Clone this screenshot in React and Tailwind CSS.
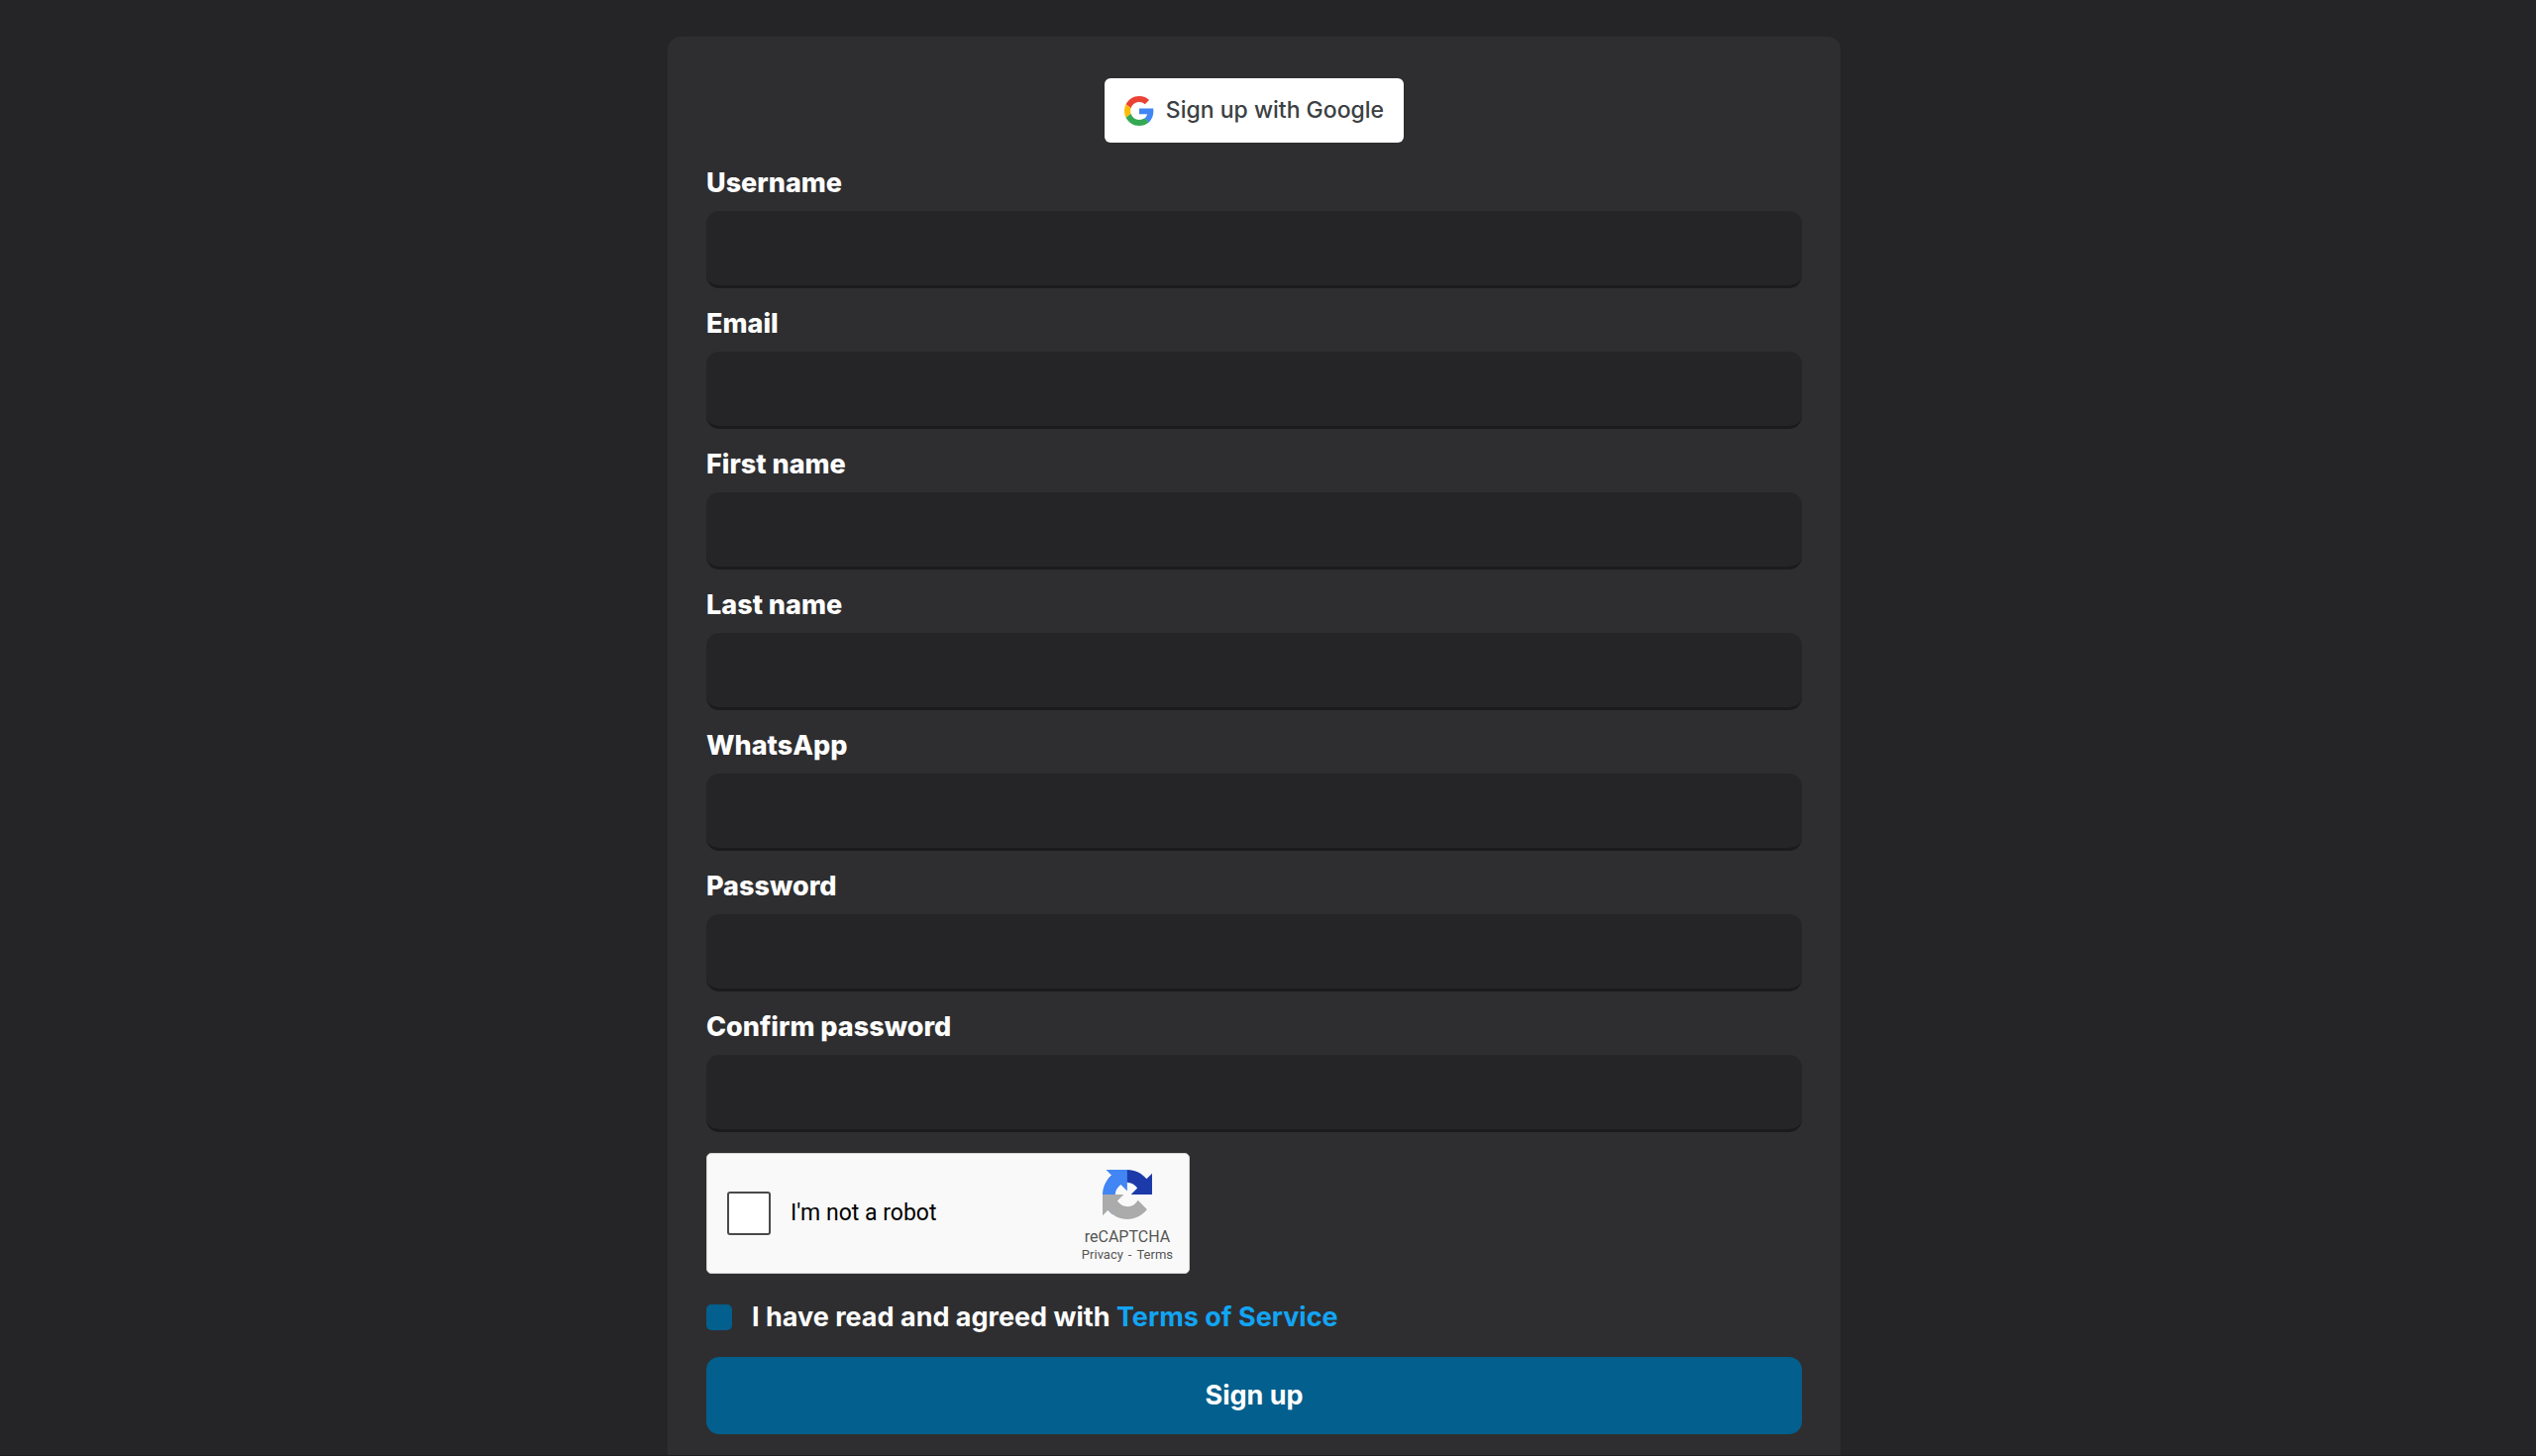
const fields = [
  { id: 'username', label: 'Username', type: 'text' },
  { id: 'email', label: 'Email', type: 'email' },
  { id: 'first-name', label: 'First name', type: 'text' },
  { id: 'last-name', label: 'Last name', type: 'text' },
  { id: 'whatsapp', label: 'WhatsApp', type: 'tel' },
  { id: 'password', label: 'Password', type: 'password' },
  { id: 'confirm-password', label: 'Confirm password', type: 'password' },
];

function GoogleLogo() {
  return (
    <svg viewBox="0 0 48 48" className="size-[30px]" aria-hidden="true">
      <path fill="#EA4335" d="M24 9.5c3.54 0 6.71 1.22 9.21 3.6l6.85-6.85C35.9 2.38 30.47 0 24 0 14.62 0 6.51 5.38 2.56 13.22l7.98 6.19C12.43 13.72 17.74 9.5 24 9.5z" />
      <path fill="#4285F4" d="M46.98 24.55c0-1.57-.15-3.09-.38-4.55H24v9.02h12.94c-.58 2.96-2.26 5.48-4.78 7.18l7.73 6c4.51-4.18 7.09-10.36 7.09-17.65z" />
      <path fill="#FBBC05" d="M10.53 28.59c-.48-1.45-.76-2.99-.76-4.59s.27-3.14.76-4.59l-7.98-6.19C.92 16.46 0 20.12 0 24c0 3.88.92 7.54 2.56 10.78l7.97-6.19z" />
      <path fill="#34A853" d="M24 48c6.48 0 11.93-2.13 15.89-5.81l-7.73-6c-2.15 1.45-4.92 2.3-8.16 2.3-6.26 0-11.57-4.22-13.47-9.91l-7.98 6.19C6.51 42.62 14.62 48 24 48z" />
    </svg>
  );
}

function RecaptchaLogo() {
  return (
    <svg viewBox="0 0 64 64" className="size-[50px]" aria-hidden="true">
      <path fill="#1c3aa9" d="M64 31.955l-.033-1.37V4.687l-7.16 7.16C50.948 4.674 42.033.093 32.05.093c-10.4 0-19.622 4.96-25.458 12.64l11.736 11.86a15.55 15.55 0 0 1 4.754-5.334c2.05-1.6 4.952-2.906 8.968-2.906.485 0 .86.057 1.135.163 4.976.393 9.288 3.14 11.828 7.124l-8.307 8.307L64 31.953" />
      <path fill="#4285f4" d="M31.862.094l-1.37.033H4.594l7.16 7.16C4.58 13.147 0 22.06 0 32.046c0 10.4 4.96 19.622 12.64 25.458L24.5 45.768a15.55 15.55 0 0 1-5.334-4.754c-1.6-2.05-2.906-4.952-2.906-8.968 0-.485.057-.86.163-1.135.393-4.976 3.14-9.288 7.124-11.828l8.307 8.307L31.86.095" />
      <path fill="#ababab" d="M.001 32.045l.033 1.37v25.898l7.16-7.16c5.86 7.173 14.774 11.754 24.76 11.754 10.4 0 19.622-4.96 25.458-12.64l-11.736-11.86a15.55 15.55 0 0 1-4.754 5.334c-2.05 1.6-4.952 2.906-8.968 2.906-.485 0-.86-.057-1.135-.163-4.976-.393-9.288-3.14-11.828-7.124l8.307-8.307c-10.522.04-22.4.066-27.295-.005" />
    </svg>
  );
}

function Field({ id, label, type }) {
  return (
    <div className="flex flex-col gap-2">
      <label htmlFor={id} className="self-start leading-10 font-extrabold">{label}</label>
      <input
        id={id}
        type={type}
        className="h-[78px] w-full rounded-[13px] border-b-3 border-[#1b1b1d] bg-[#252527] px-6 outline-none"
      />
    </div>
  );
}

function Recaptcha() {
  return (
    <div className="flex w-[488px] max-w-full items-center justify-between rounded-[5px] border border-[#d3d3d3] bg-[#f9f9f9] py-[10px] pr-4 pl-5 font-['Roboto',sans-serif] font-normal">
      <div className="flex items-center gap-5">
        <input
          id="robot"
          type="checkbox"
          className="size-11 appearance-none rounded-[3px] border-2 border-[#4a4a4a] bg-white"
        />
        <label htmlFor="robot" className="text-[23px] leading-7 text-black">I'm not a robot</label>
      </div>
      <div className="flex flex-col items-center pt-[6px] text-[#555555]">
        <RecaptchaLogo />
        <span className="mt-2 text-base leading-5">reCAPTCHA</span>
        <span className="flex gap-[5px] text-[13px] leading-4">
          <a href="#privacy">Privacy</a>
          <span>-</span>
          <a href="#terms">Terms</a>
        </span>
      </div>
    </div>
  );
}

export default function App() {
  return (
    <main className="flex min-h-screen justify-center border-b border-[#1f1b1e] bg-[#252527] pt-[37px] pr-7 font-['Inter',sans-serif] text-[27px] font-bold text-white">
      <form className="flex w-full max-w-[1184px] flex-col rounded-t-[13px] bg-[#2e2e30] px-[39px] pt-[42px] pb-5">
        <button
          type="button"
          className="flex h-[65px] items-center gap-3 self-center rounded-[6px] bg-white px-5 font-['Inter',sans-serif] text-[23px] font-medium text-[#3c4043]"
        >
          <GoogleLogo />
          Sign up with Google
        </button>
        <div className="mt-[21px] flex flex-col gap-4">
          {fields.map((field) => (
            <Field key={field.id} {...field} />
          ))}
        </div>
        <div className="mt-[21px]">
          <Recaptcha />
        </div>
        <div className="mt-6 flex items-center gap-5 leading-10">
          <input
            id="agree"
            type="checkbox"
            className="size-[26px] appearance-none rounded-[5px] bg-[#035f8d]"
          />
          <label htmlFor="agree">
            I have read and agreed with <a href="#terms-of-service" className="text-[#12a5f4]">Terms of Service</a>
          </label>
        </div>
        <button type="submit" className="mt-5 h-[78px] rounded-[13px] bg-[#035f8d]">Sign up</button>
      </form>
    </main>
  );
}
